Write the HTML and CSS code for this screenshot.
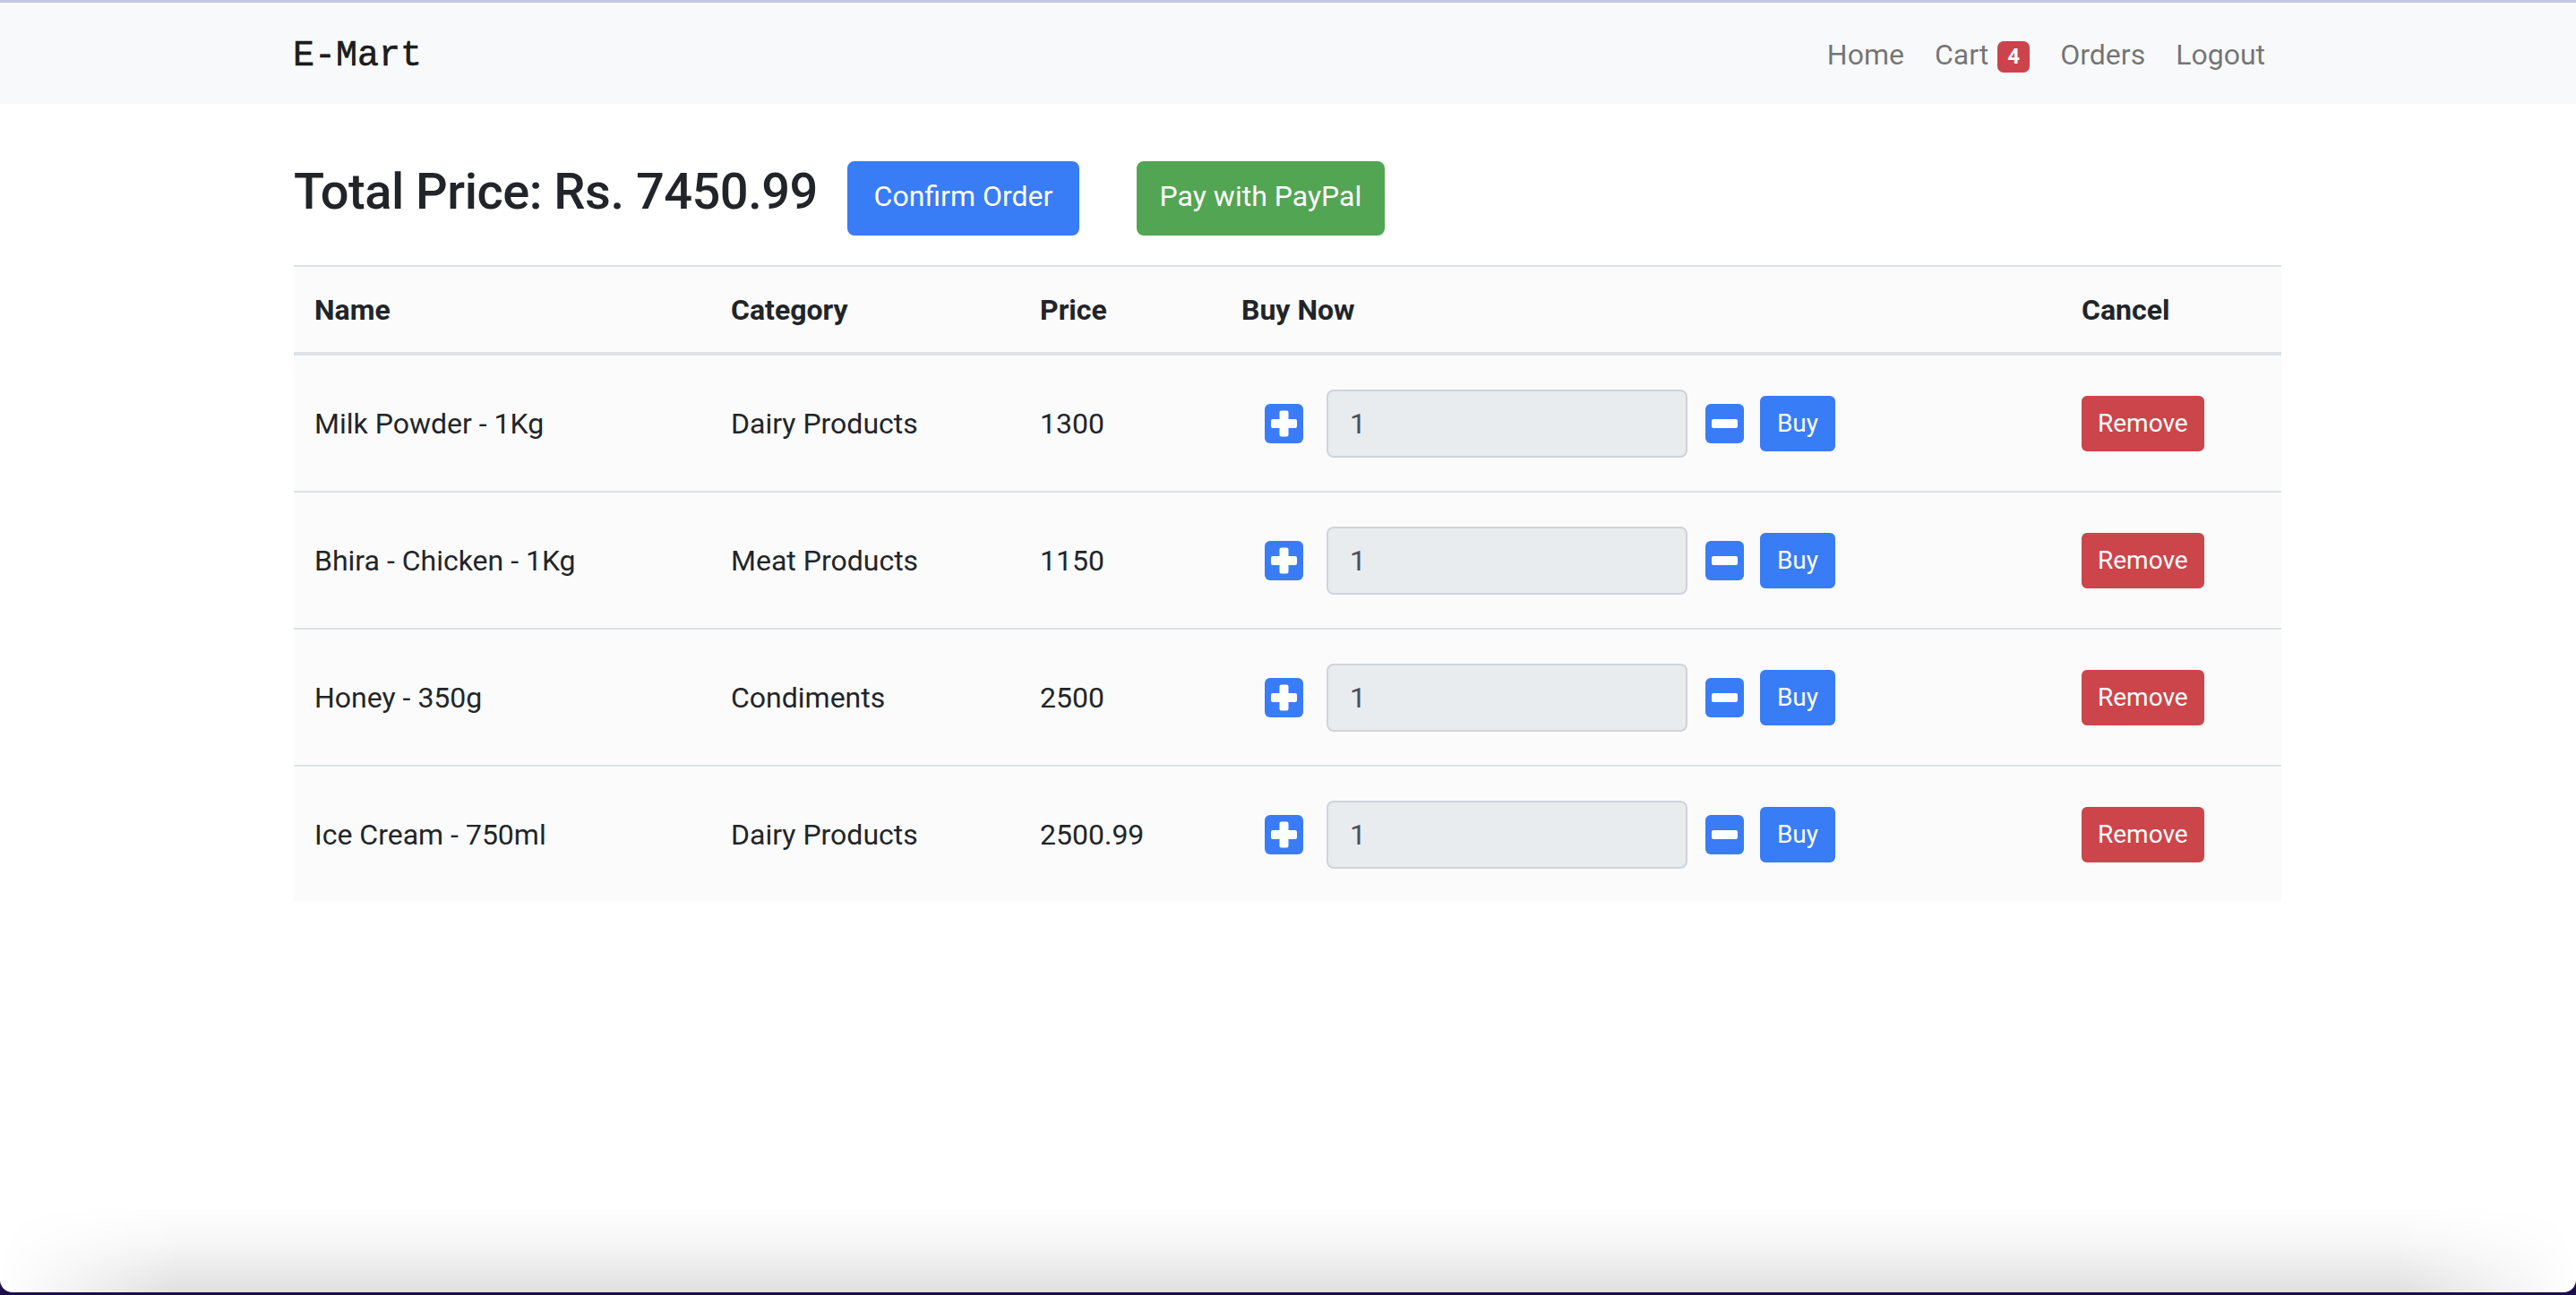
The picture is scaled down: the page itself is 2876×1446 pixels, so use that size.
FILE: index.html
```html
<!DOCTYPE html>
<html lang="en">
<head>
<meta charset="utf-8">
<title>E-Mart - Cart</title>
<link rel="stylesheet" href="styles.css">
</head>
<body>
<div class="window">
  <nav class="navbar">
    <div class="container nav-inner">
      <a class="brand" href="#">E-Mart</a>
      <ul class="nav-links">
        <li><a href="#">Home</a></li>
        <li><a href="#">Cart<span class="badge">4</span></a></li>
        <li><a href="#">Orders</a></li>
        <li><a href="#">Logout</a></li>
      </ul>
    </div>
  </nav>

  <main class="container">
    <div class="summary">
      <h3 class="total">Total Price: Rs. 7450.99</h3>
      <button class="btn btn-primary btn-confirm">Confirm Order</button>
      <button class="btn btn-success btn-paypal">Pay with PayPal</button>
    </div>

    <div class="cart-table">
      <div class="trow thead">
        <div class="cell">Name</div>
        <div class="cell">Category</div>
        <div class="cell">Price</div>
        <div class="cell">Buy Now</div>
        <div class="cell">Cancel</div>
      </div>

      <div class="trow">
        <div class="cell">Milk Powder - 1Kg</div>
        <div class="cell">Dairy Products</div>
        <div class="cell">1300</div>
        <div class="cell buy-cell">
          <span class="qty-btn plus"><svg viewBox="0 0 43 44" width="43" height="44"><rect width="43" height="44" rx="6" fill="#3a7cf5"/><rect x="7" y="17" width="29" height="10" rx="2" fill="#fff"/><rect x="16.5" y="7.5" width="10" height="29" rx="2" fill="#fff"/></svg></span>
          <input class="qty" type="text" value="1" readonly>
          <span class="qty-btn minus"><svg viewBox="0 0 43 44" width="43" height="44"><rect width="43" height="44" rx="6" fill="#3a7cf5"/><rect x="7" y="17" width="29" height="10" rx="2" fill="#fff"/></svg></span>
          <button class="btn btn-sm btn-primary btn-buy">Buy</button>
        </div>
        <div class="cell"><button class="btn btn-sm btn-danger">Remove</button></div>
      </div>

      <div class="trow">
        <div class="cell">Bhira - Chicken - 1Kg</div>
        <div class="cell">Meat Products</div>
        <div class="cell">1150</div>
        <div class="cell buy-cell">
          <span class="qty-btn plus"><svg viewBox="0 0 43 44" width="43" height="44"><rect width="43" height="44" rx="6" fill="#3a7cf5"/><rect x="7" y="17" width="29" height="10" rx="2" fill="#fff"/><rect x="16.5" y="7.5" width="10" height="29" rx="2" fill="#fff"/></svg></span>
          <input class="qty" type="text" value="1" readonly>
          <span class="qty-btn minus"><svg viewBox="0 0 43 44" width="43" height="44"><rect width="43" height="44" rx="6" fill="#3a7cf5"/><rect x="7" y="17" width="29" height="10" rx="2" fill="#fff"/></svg></span>
          <button class="btn btn-sm btn-primary btn-buy">Buy</button>
        </div>
        <div class="cell"><button class="btn btn-sm btn-danger">Remove</button></div>
      </div>

      <div class="trow">
        <div class="cell">Honey - 350g</div>
        <div class="cell">Condiments</div>
        <div class="cell">2500</div>
        <div class="cell buy-cell">
          <span class="qty-btn plus"><svg viewBox="0 0 43 44" width="43" height="44"><rect width="43" height="44" rx="6" fill="#3a7cf5"/><rect x="7" y="17" width="29" height="10" rx="2" fill="#fff"/><rect x="16.5" y="7.5" width="10" height="29" rx="2" fill="#fff"/></svg></span>
          <input class="qty" type="text" value="1" readonly>
          <span class="qty-btn minus"><svg viewBox="0 0 43 44" width="43" height="44"><rect width="43" height="44" rx="6" fill="#3a7cf5"/><rect x="7" y="17" width="29" height="10" rx="2" fill="#fff"/></svg></span>
          <button class="btn btn-sm btn-primary btn-buy">Buy</button>
        </div>
        <div class="cell"><button class="btn btn-sm btn-danger">Remove</button></div>
      </div>

      <div class="trow">
        <div class="cell">Ice Cream - 750ml</div>
        <div class="cell">Dairy Products</div>
        <div class="cell">2500.99</div>
        <div class="cell buy-cell">
          <span class="qty-btn plus"><svg viewBox="0 0 43 44" width="43" height="44"><rect width="43" height="44" rx="6" fill="#3a7cf5"/><rect x="7" y="17" width="29" height="10" rx="2" fill="#fff"/><rect x="16.5" y="7.5" width="10" height="29" rx="2" fill="#fff"/></svg></span>
          <input class="qty" type="text" value="1" readonly>
          <span class="qty-btn minus"><svg viewBox="0 0 43 44" width="43" height="44"><rect width="43" height="44" rx="6" fill="#3a7cf5"/><rect x="7" y="17" width="29" height="10" rx="2" fill="#fff"/></svg></span>
          <button class="btn btn-sm btn-primary btn-buy">Buy</button>
        </div>
        <div class="cell"><button class="btn btn-sm btn-danger">Remove</button></div>
      </div>
    </div>
  </main>

  <div class="shade"></div>
</div>
</body>
</html>
```

FILE: styles.css
```css
* { box-sizing: border-box; }

html, body {
  margin: 0;
  padding: 0;
}

body {
  height: 1446px;
  overflow: hidden;
  background: #1c0e4c;
  font-family: Roboto, "Liberation Sans", Arial, sans-serif;
  font-size: 32px;
  line-height: 48px;
  color: #212529;
}

.window {
  height: 1443px;
  background: #ffffff;
  border-top: 3px solid #c3c6e4;
  border-radius: 0 0 14px 14px;
  overflow: hidden;
  display: flex;
  flex-direction: column;
}

.container {
  width: 2220px;
  margin: 0 auto;
}

/* ---------- navbar ---------- */
.navbar {
  height: 113px;
  padding-top: 3px;
  background: #f8f9fa;
  display: flex;
  align-items: center;
  flex: none;
}

.nav-inner {
  display: flex;
  align-items: center;
  justify-content: space-between;
}

.brand {
  font-family: "Liberation Mono", "Courier New", monospace;
  font-size: 40px;
  line-height: 60px;
  color: rgba(0, 0, 0, 0.9);
  text-decoration: none;
  margin: 3px 0 0 -1px;
  -webkit-text-stroke: 0.6px rgba(0, 0, 0, 0.9);
}

.nav-links {
  list-style: none;
  margin: 0;
  padding: 0 2px 0 0;
  display: flex;
}

.nav-links a {
  display: block;
  padding: 0 17px;
  color: rgba(0, 0, 0, 0.55);
  text-decoration: none;
  font-size: 32px;
  line-height: 48px;
}

.badge {
  display: inline-block;
  margin-left: 10px;
  min-width: 36px;
  height: 35px;
  padding: 0 9px;
  border-radius: 7px;
  background: #cc444b;
  color: #fff;
  font-size: 24px;
  font-weight: 700;
  line-height: 35px;
  text-align: center;
  vertical-align: 1px;
}

/* ---------- summary ---------- */
.summary {
  margin-top: 64px;
  display: flex;
  align-items: flex-start;
  height: 83px;
}

.total {
  margin: 1px 0 0;
  font-size: 56px;
  line-height: 67px;
  font-weight: 500;
  letter-spacing: -0.5px;
  color: #212529;
}

.btn {
  font-family: Roboto, "Liberation Sans", Arial, sans-serif;
  border: 2px solid transparent;
  border-radius: 8px;
  color: #fff;
  cursor: pointer;
  padding: 0;
  text-align: center;
}

.btn-primary { background: #387cf6; border-color: #387cf6; }
.btn-success { background: #52a552; border-color: #52a552; }
.btn-danger { background: #cc454b; border-color: #cc454b; }

.btn-confirm {
  margin-left: 33px;
  width: 259px;
  height: 83px;
  padding-bottom: 5px;
  font-size: 32px;
}

.btn-paypal {
  margin-left: 64px;
  width: 277px;
  height: 83px;
  padding-bottom: 5px;
  font-size: 32px;
}

.btn-sm {
  height: 62px;
  padding: 0 16px;
  font-size: 28px;
  line-height: 42px;
  border-radius: 6px;
}

.btn-buy { width: 84px; }

/* ---------- cart table ---------- */
.cart-table {
  margin-top: 33px;
  width: 2219px;
  background: #fbfbfc;
  border-top: 2px solid #dee2e6;
}

.trow {
  display: grid;
  grid-template-columns: 465px 345px 225px 938px 246px;
  align-items: center;
  height: 151px;
}

.trow + .trow:not(.thead) {
  height: 153px;
  border-top: 2px solid #dee2e6;
}

.thead + .trow {
  height: 151px !important;
  border-top: none !important;
}

.trow.thead {
  height: 99px;
  border-bottom: 4px solid #dee2e6;
  font-weight: 700;
}

.cell {
  padding: 0 24px 0 23px;
  white-space: nowrap;
}

.buy-cell {
  display: flex;
  align-items: center;
}

.qty-btn {
  display: block;
  width: 43px;
  height: 44px;
  flex: none;
}

.qty-btn svg { display: block; }

.plus { margin-left: 26px; }

.qty {
  margin-left: 26px;
  width: 403px;
  height: 76px;
  padding: 0 24px;
  border: 2px solid #ced4da;
  border-radius: 8px;
  background: #e9ecef;
  font-family: Roboto, "Liberation Sans", Arial, sans-serif;
  font-size: 32px;
  color: #495057;
  outline: none;
  flex: none;
}

.minus { margin-left: 20px; }

.btn-buy { margin-left: 18px; flex: none; }

/* ---------- window bottom shade ---------- */
.shade {
  margin-top: auto;
  height: 95px;
  flex: none;
  background: linear-gradient(to bottom, rgba(0, 0, 0, 0), rgba(0, 0, 0, 0.03) 40%, rgba(0, 0, 0, 0.12));
  -webkit-mask-image: linear-gradient(to right, transparent, #000 200px, #000 calc(100% - 200px), transparent);
  mask-image: linear-gradient(to right, transparent, #000 200px, #000 calc(100% - 200px), transparent);
}
```
